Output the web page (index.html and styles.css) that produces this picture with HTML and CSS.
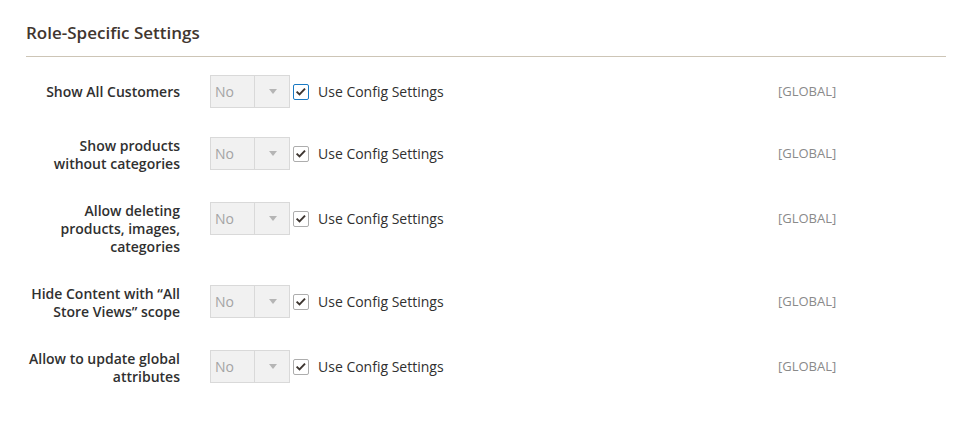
FILE: index.html
```html
<!DOCTYPE html>
<html lang="en">
<head>
<meta charset="utf-8">
<title>Role-Specific Settings</title>
<link rel="stylesheet" href="styles.css">
</head>
<body>
<div class="fieldset">
  <h2 class="fieldset-title">Role-Specific Settings</h2>
  <div class="fields">
    <div class="field">
      <label class="field-label"><span>Show All Customers</span></label>
      <div class="field-control">
        <div class="select"><span class="select-value">No</span><span class="select-arrow"></span></div>
        <span class="checkbox focused"><svg viewBox="0 0 16 16" width="14" height="14"><path d="M3 7.6 L6.3 10.8 L12.6 4.2" fill="none" stroke="#3d3530" stroke-width="2.2"/></svg></span>
        <span class="checkbox-label">Use Config Settings</span>
      </div>
      <div class="field-scope">[GLOBAL]</div>
    </div>
    <div class="field">
      <label class="field-label"><span>Show products without categories</span></label>
      <div class="field-control">
        <div class="select"><span class="select-value">No</span><span class="select-arrow"></span></div>
        <span class="checkbox"><svg viewBox="0 0 16 16" width="14" height="14"><path d="M3 7.6 L6.3 10.8 L12.6 4.2" fill="none" stroke="#3d3530" stroke-width="2.2"/></svg></span>
        <span class="checkbox-label">Use Config Settings</span>
      </div>
      <div class="field-scope">[GLOBAL]</div>
    </div>
    <div class="field">
      <label class="field-label"><span>Allow deleting products, images, categories</span></label>
      <div class="field-control">
        <div class="select"><span class="select-value">No</span><span class="select-arrow"></span></div>
        <span class="checkbox"><svg viewBox="0 0 16 16" width="14" height="14"><path d="M3 7.6 L6.3 10.8 L12.6 4.2" fill="none" stroke="#3d3530" stroke-width="2.2"/></svg></span>
        <span class="checkbox-label">Use Config Settings</span>
      </div>
      <div class="field-scope">[GLOBAL]</div>
    </div>
    <div class="field">
      <label class="field-label"><span>Hide Content with “All Store Views” scope</span></label>
      <div class="field-control">
        <div class="select"><span class="select-value">No</span><span class="select-arrow"></span></div>
        <span class="checkbox"><svg viewBox="0 0 16 16" width="14" height="14"><path d="M3 7.6 L6.3 10.8 L12.6 4.2" fill="none" stroke="#3d3530" stroke-width="2.2"/></svg></span>
        <span class="checkbox-label">Use Config Settings</span>
      </div>
      <div class="field-scope">[GLOBAL]</div>
    </div>
    <div class="field">
      <label class="field-label"><span>Allow to update global attributes</span></label>
      <div class="field-control">
        <div class="select"><span class="select-value">No</span><span class="select-arrow"></span></div>
        <span class="checkbox"><svg viewBox="0 0 16 16" width="14" height="14"><path d="M3 7.6 L6.3 10.8 L12.6 4.2" fill="none" stroke="#3d3530" stroke-width="2.2"/></svg></span>
        <span class="checkbox-label">Use Config Settings</span>
      </div>
      <div class="field-scope">[GLOBAL]</div>
    </div>
  </div>
</div>
</body>
</html>
```
FILE: styles.css
```css
html, body {
  margin: 0;
  padding: 0;
  background: #ffffff;
}
body {
  font-family: "Open Sans", "Liberation Sans", sans-serif;
  color: #303030;
  font-size: 14px;
}
.fieldset {
  margin: 0 9px 0 26px;
  padding-top: 23px;
}
.fieldset-title {
  margin: 0;
  font-size: 17px;
  font-weight: 600;
  line-height: 20px;
  color: #41362f;
  padding-bottom: 13px;
  border-bottom: 1px solid #cdc5b6;
}
.fields {
  display: flex;
  flex-direction: column;
  gap: 29px;
  padding-top: 18px;
}
.field {
  display: flex;
  align-items: flex-start;
}
.field-label {
  width: 154px;
  padding-right: 30px;
  min-height: 33px;
  display: flex;
  align-items: center;
  justify-content: flex-end;
  text-align: right;
  font-weight: 600;
  line-height: 18px;
  color: #303030;
}
.field-control {
  width: 568px;
  display: flex;
  align-items: center;
  height: 33px;
}
.select {
  width: 80px;
  height: 33px;
  box-sizing: border-box;
  display: flex;
  border: 1px solid #d9d9d9;
  background: #f1f1f1;
}
.select-value {
  flex: 1;
  padding-left: 4px;
  line-height: 31px;
  color: #a4a4a4;
}
.select-arrow {
  width: 34px;
  border-left: 1px solid #d9d9d9;
  display: flex;
  align-items: center;
  justify-content: center;
}
.select-arrow::before {
  content: "";
  width: 0;
  height: 0;
  border-left: 4px solid transparent;
  border-right: 4px solid transparent;
  border-top: 5px solid #b5b5b5;
  margin-left: 1px;
}
.checkbox {
  width: 16px;
  height: 16px;
  box-sizing: border-box;
  margin-left: 3px;
  border: 1px solid #adadad;
  border-radius: 2px;
  background: #ffffff;
  display: flex;
  align-items: center;
  justify-content: center;
}
.checkbox.focused {
  border-color: #1979c3;
}
.checkbox-label {
  margin-left: 9px;
  line-height: 33px;
  color: #303030;
}
.field-scope {
  line-height: 33px;
  font-size: 13px;
  color: #8a8a8a;
}
```
